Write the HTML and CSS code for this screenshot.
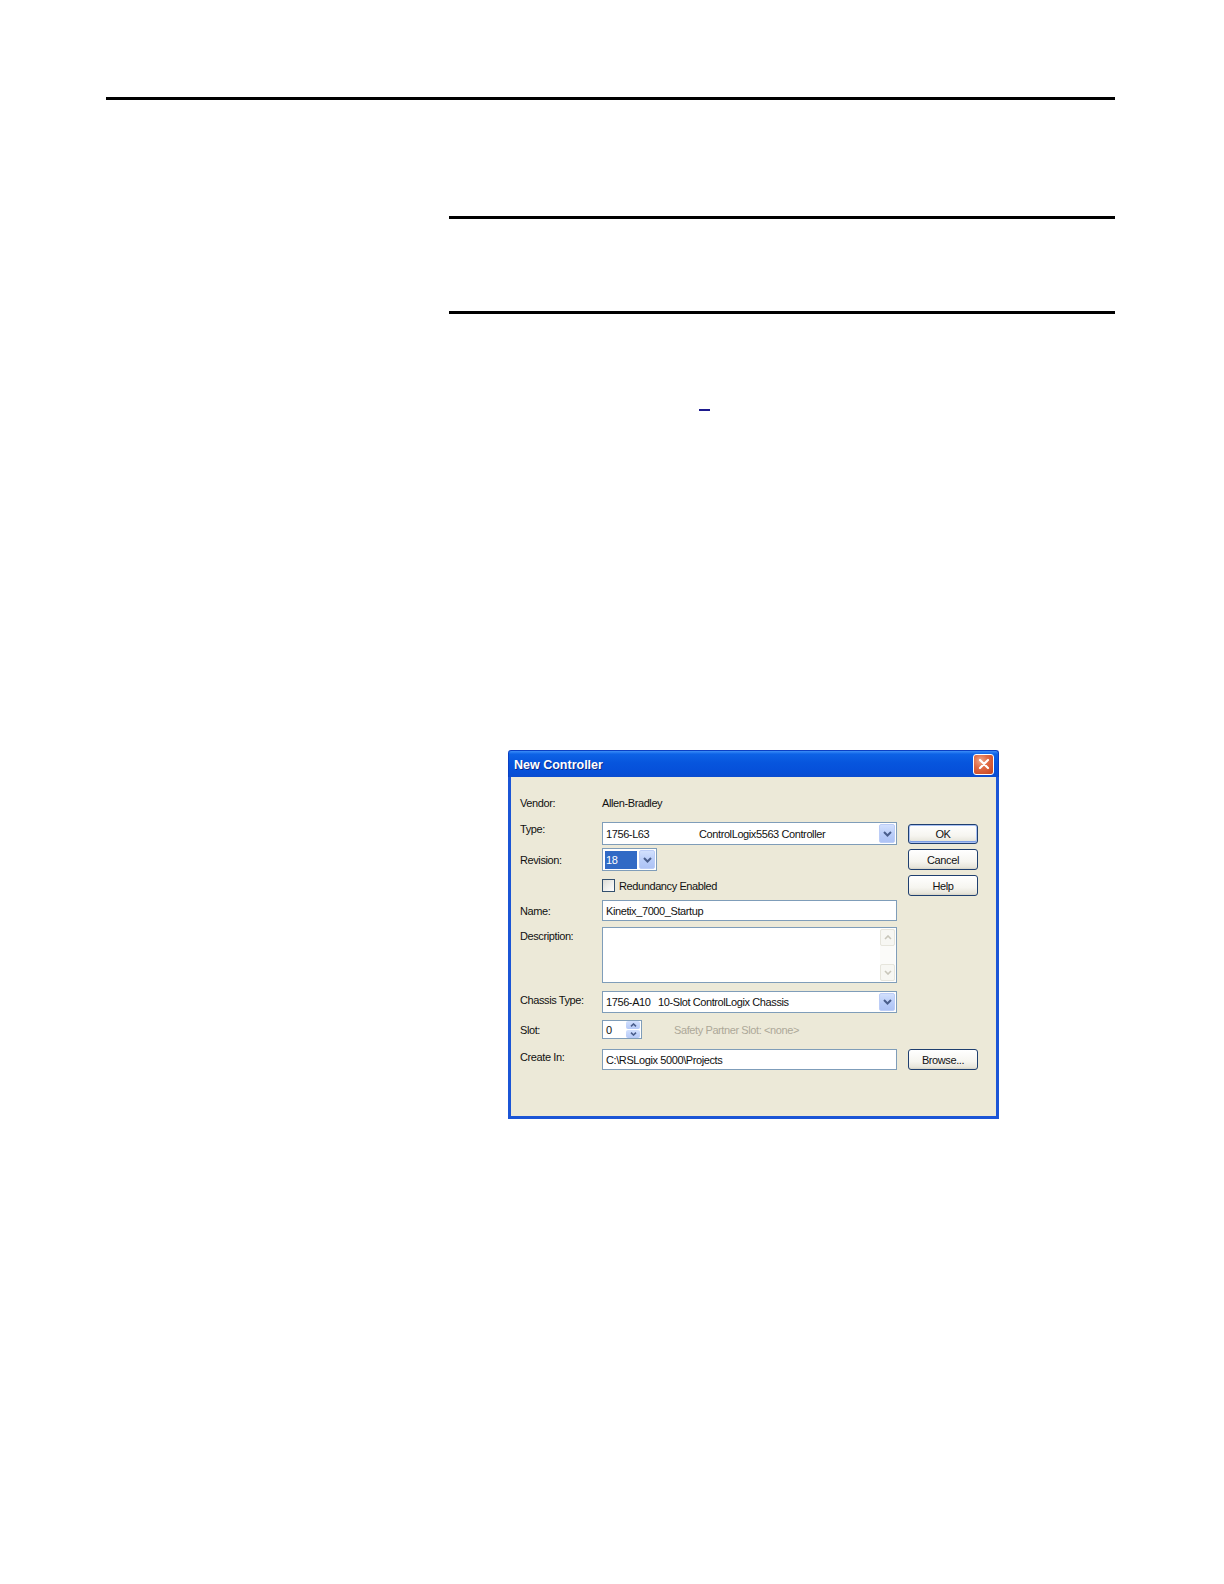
FILE: index.html
```html
<!DOCTYPE html>
<html lang="en">
<head>
<meta charset="utf-8">
<title>New Controller</title>
<link rel="stylesheet" href="styles.css">
</head>
<body>
<div class="page">
  <div class="rule-top"></div>
  <div class="content">
    <div class="rule rule-a"></div>
    <div class="rule rule-b"></div>
    <div class="link-mark"></div>

    <div class="dialog">
      <div class="titlebar">
        <span class="title">New Controller</span>
        <span class="close">
          <svg width="12" height="12" viewBox="0 0 12 12"><path d="M2 2 L10 10 M10 2 L2 10" stroke="#fff" stroke-width="2.2" stroke-linecap="round" fill="none"/></svg>
        </span>
      </div>
      <div class="dlg-body">
        <div class="row row-vendor">
          <span class="label">Vendor:</span>
          <span class="value">Allen-Bradley</span>
        </div>

        <div class="row row-type">
          <span class="label lab-up">Type:</span>
          <div class="combo wide">
            <span class="c1 c1-type">1756-L63</span><span>ControlLogix5563 Controller</span>
            <span class="drop"><svg width="9" height="6" viewBox="0 0 9 6"><path d="M1 1 L4.5 4.5 L8 1" stroke="#4A5E8C" stroke-width="2" fill="none"/></svg></span>
          </div>
          <button class="btn btn-default">OK</button>
        </div>

        <div class="row row-rev">
          <span class="label">Revision:</span>
          <div class="combo narrow">
            <span class="sel">18</span>
            <span class="drop"><svg width="9" height="6" viewBox="0 0 9 6"><path d="M1 1 L4.5 4.5 L8 1" stroke="#4A5E8C" stroke-width="2" fill="none"/></svg></span>
          </div>
          <div class="spacer-rev"></div>
          <button class="btn">Cancel</button>
        </div>

        <div class="row row-check">
          <span class="label"></span>
          <div class="checkline">
            <span class="checkbox"></span>
            <span>Redundancy Enabled</span>
          </div>
          <button class="btn">Help</button>
        </div>

        <div class="row row-name">
          <span class="label">Name:</span>
          <div class="field wide">Kinetix_7000_Startup</div>
        </div>

        <div class="row row-desc">
          <span class="label lab-top">Description:</span>
          <div class="field wide desc">
            <div class="scroll">
              <span class="sbtn"><svg width="8" height="5" viewBox="0 0 8 5"><path d="M1 4 L4 1 L7 4" stroke="#C8C6BA" stroke-width="1.6" fill="none"/></svg></span>
              <span class="sbtn"><svg width="8" height="5" viewBox="0 0 8 5"><path d="M1 1 L4 4 L7 1" stroke="#C8C6BA" stroke-width="1.6" fill="none"/></svg></span>
            </div>
          </div>
        </div>

        <div class="row row-chassis">
          <span class="label lab-up2">Chassis Type:</span>
          <div class="combo wide">
            <span class="c1 c1-chassis">1756-A10</span><span>10-Slot ControlLogix Chassis</span>
            <span class="drop"><svg width="9" height="6" viewBox="0 0 9 6"><path d="M1 1 L4.5 4.5 L8 1" stroke="#4A5E8C" stroke-width="2" fill="none"/></svg></span>
          </div>
        </div>

        <div class="row row-slot">
          <span class="label">Slot:</span>
          <div class="spin">
            <span>0</span>
            <span class="spin-btns">
              <span class="sp"><svg width="7" height="4" viewBox="0 0 7 4"><path d="M1 3.3 L3.5 1 L6 3.3" stroke="#4A5E8C" stroke-width="1.6" fill="none"/></svg></span>
              <span class="sp"><svg width="7" height="4" viewBox="0 0 7 4"><path d="M1 0.7 L3.5 3 L6 0.7" stroke="#4A5E8C" stroke-width="1.6" fill="none"/></svg></span>
            </span>
          </div>
          <span class="disabled">Safety Partner Slot: &lt;none&gt;</span>
        </div>

        <div class="row row-create">
          <span class="label lab-up2">Create In:</span>
          <div class="field wide">C:\RSLogix 5000\Projects</div>
          <button class="btn">Browse...</button>
        </div>
      </div>
    </div>
  </div>
</div>
</body>
</html>
```

FILE: styles.css
```css
html, body {
  margin: 0;
  padding: 0;
  background: #ffffff;
}

.page {
  width: 1224px;
  min-height: 1584px;
  padding-top: 97px;
  box-sizing: border-box;
}

.rule-top {
  margin-left: 106px;
  width: 1009px;
  height: 3px;
  background: #000;
}

.content {
  margin-left: 449px;
  width: 666px;
}

.rule {
  height: 3px;
  background: #000;
}

.rule-a { margin-top: 116px; }
.rule-b { margin-top: 92px; }

.link-mark {
  margin-top: 95px;
  margin-left: 250px;
  width: 11px;
  height: 2px;
  background: #1d1a8e;
}

/* ---------- dialog ---------- */
.dialog {
  margin-top: 339px;
  margin-left: 59px;
  width: 491px;
  font-family: "Liberation Sans", Arial, sans-serif;
  font-size: 11px;
  letter-spacing: -0.4px;
  color: #111;
}

.titlebar {
  height: 27px;
  box-sizing: border-box;
  display: flex;
  align-items: center;
  justify-content: space-between;
  padding: 0 4px 0 5px;
  border-radius: 3px 3px 0 0;
  background: linear-gradient(#3b8df8 0%, #0d62e6 12%, #0755dd 45%, #0650d9 80%, #0a4ccf 100%);
  border: 1px solid #0a3fc4;
  border-bottom: none;
}

.title {
  color: #fff;
  font-weight: bold;
  font-size: 12.5px;
  letter-spacing: 0;
  text-shadow: 1px 1px 0 #0b2a8a;
  padding-top: 1px;
}

.close {
  width: 21px;
  height: 21px;
  box-sizing: border-box;
  border: 1px solid #ffffff;
  border-radius: 3px;
  background: radial-gradient(circle at 35% 30%, #f0a88a 0%, #e06a45 40%, #c5421c 100%);
  display: flex;
  align-items: center;
  justify-content: center;
}

.dlg-body {
  background: #ECE9D8;
  border: 3px solid #1b55d6;
  border-top: none;
  padding: 19px 0 46px 9px;
}

.row {
  display: flex;
  align-items: center;
}

.row-vendor { height: 14px; }
.row-type { height: 23px; margin-top: 12px; }
.row-rev { height: 23px; margin-top: 3px; }
.row-check { height: 21px; margin-top: 4px; }
.row-name { height: 21px; margin-top: 4px; }
.row-desc { height: 56px; margin-top: 6px; align-items: flex-start; }
.row-chassis { height: 22px; margin-top: 8px; }
.row-slot { height: 19px; margin-top: 7px; }
.row-create { height: 21px; margin-top: 10px; }

.label {
  width: 82px;
  flex: none;
  line-height: 14px;
}

.lab-up { margin-bottom: 9px; }
.lab-up2 { margin-bottom: 5px; }
.lab-top { margin-top: 2px; }

.value { line-height: 14px; }

.wide { width: 295px; }

.combo, .field, .spin {
  box-sizing: border-box;
  border: 1px solid #7F9DB9;
  background: #fff;
  display: flex;
  align-items: center;
  flex: none;
  padding-left: 3px;
  height: 100%;
}

.c1 { flex: none; }
.c1-type { width: 93px; }
.c1-chassis { width: 52px; }

.drop {
  margin-left: auto;
  margin-right: 1px;
  width: 16px;
  height: calc(100% - 2px);
  box-sizing: border-box;
  border-radius: 2px;
  border: 1px solid #bccdf7;
  background: linear-gradient(#d2e0fd, #b7cbf8 60%, #aec3f5);
  display: flex;
  align-items: center;
  justify-content: center;
}

.narrow {
  width: 55px;
  padding-left: 2px;
}

.sel {
  width: 32px;
  height: 18px;
  line-height: 18px;
  background: #316AC5;
  color: #fff;
  padding-left: 1px;
  box-sizing: border-box;
}

.narrow .drop {
  margin-left: 2px;
}

.spacer-rev {
  width: 240px;
  flex: none;
}

.checkline {
  width: 295px;
  flex: none;
  display: flex;
  align-items: center;
  gap: 4px;
}

.checkbox {
  width: 13px;
  height: 13px;
  box-sizing: border-box;
  border: 1px solid #33506e;
  background: linear-gradient(135deg, #dcdcd6, #ffffff);
}

.btn {
  margin-left: 11px;
  width: 70px;
  height: 21px;
  flex: none;
  box-sizing: border-box;
  border: 1px solid #1f3f6f;
  border-radius: 3px;
  background: linear-gradient(#ffffff 0%, #f6f5f0 60%, #e8e6dc 90%, #d6d2c6 100%);
  font-family: "Liberation Sans", Arial, sans-serif;
  font-size: 11px;
  letter-spacing: -0.4px;
  color: #111;
  padding: 0;
  text-align: center;
}

.btn-default {
  height: 20px;
  box-shadow: inset 0 0 0 1px #a9c1f3, inset 0 -1px 0 1px #7d9fe6;
}

.desc {
  justify-content: flex-end;
  align-items: stretch;
  padding: 1px;
}

.scroll {
  width: 15px;
  display: flex;
  flex-direction: column;
  justify-content: space-between;
  background: #fbfbf9;
}

.sbtn {
  height: 17px;
  box-sizing: border-box;
  border: 1px solid #e6e5dc;
  border-radius: 2px;
  background: #f7f7f3;
  display: flex;
  align-items: center;
  justify-content: center;
}

.spin {
  width: 40px;
}

.spin-btns {
  margin-left: auto;
  margin-right: 1px;
  width: 14px;
  height: 17px;
  display: flex;
  flex-direction: column;
  gap: 1px;
}

.sp {
  flex: 1;
  border-radius: 2px;
  background: linear-gradient(#d2e0fd, #b5c9f7);
  display: flex;
  align-items: center;
  justify-content: center;
}

.disabled {
  margin-left: 32px;
  color: #aca899;
}
```
